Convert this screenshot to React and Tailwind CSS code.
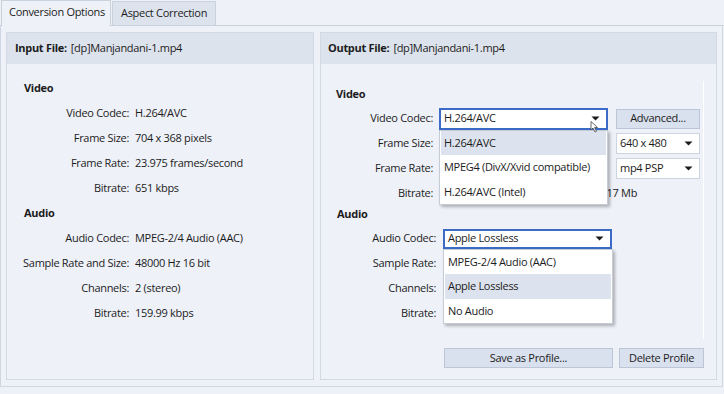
import React from "react";

const Caret = () => (
  <svg width="9" height="5" viewBox="0 0 9 5" className="shrink-0">
    <path d="M0.5 0.5 H8.5 L4.5 4.5 Z" fill="#1b1b1b" />
  </svg>
);

function Combo({ value, focused, className = "" }) {
  return (
    <div
      className={
        "flex items-center justify-between bg-white pl-[3px] pr-[6px] " +
        (focused ? "border-2 border-[#3b6bc6] " : "border border-[#cdd4df] ") +
        className
      }
    >
      <span className="whitespace-nowrap">{value}</span>
      <Caret />
    </div>
  );
}

function Menu({ items, active, className = "" }) {
  return (
    <div
      className={
        "absolute z-10 bg-white border border-[#c6ccd6] shadow-[2px_2px_3px_rgba(0,0,0,0.28)] px-px " +
        className
      }
    >
      {items.map((it, i) => (
        <div
          key={it}
          className={
            "h-[24.5px] flex items-center pl-[3px] whitespace-nowrap " +
            (i === active ? "bg-[#dde3ee]" : "")
          }
        >
          {it}
        </div>
      ))}
    </div>
  );
}

function Button({ children, className = "" }) {
  return (
    <div
      className={
        "flex items-center justify-center whitespace-nowrap bg-[#d9e0ee] border border-[#bcc6d7] " + className
      }
    >
      {children}
    </div>
  );
}

const inputRows = [
  ["Video", null],
  ["Video Codec:", "H.264/AVC"],
  ["Frame Size:", "704 x 368 pixels"],
  ["Frame Rate:", "23.975 frames/second"],
  ["Bitrate:", "651 kbps"],
  ["Audio", null],
  ["Audio Codec:", "MPEG-2/4 Audio (AAC)"],
  ["Sample Rate and Size:", "48000 Hz 16 bit"],
  ["Channels:", "2 (stereo)"],
  ["Bitrate:", "159.99 kbps"],
];

export default function App() {
  return (
    <div
      className="w-[724px] h-[394px] bg-[#eef1f7] text-[#1c1c1c] text-[11px] tracking-[-0.3px] overflow-hidden"
      style={{ fontFamily: '"Segoe UI", "Open Sans", sans-serif' }}
    >
      {/* tabs */}
      <div className="h-[26px] flex items-end border-b border-[#c9d1dd]">
        <div className="ml-[1px] w-[110px] h-[26px] -mb-px bg-[#eef1f8] border-l border-t border-r border-[#c9d1dd] flex items-center whitespace-nowrap pl-[7px] pb-[3px]">
          Conversion Options
        </div>
        <div className="ml-[1px] w-[104px] h-[24px] bg-[#dde3ed] border-l border-t border-r border-[#c9d1dd] flex items-center whitespace-nowrap pl-[8px]">
          Aspect Correction
        </div>
      </div>

      {/* page */}
      <div className="w-[723px] h-[361px] bg-[#eef1f8] border-r border-b border-l border-[#d0d7e2] flex gap-[6px] pl-[5px] pt-[6px]">
        {/* input panel */}
        <div className="w-[308px] h-[348px] border border-[#d3d9e3] bg-[#eef1f8]">
          <div className="h-[31px] bg-[#dde3ec] flex items-center pl-[8px] pb-[1px]">
            <span className="font-bold mr-[4px]">Input File:</span>
            <span>[dp]Manjandani-1.mp4</span>
          </div>
          <div className="pt-[12px]">
            {inputRows.map(([label, value], i) =>
              value === null ? (
                <div key={i} className="h-[25px] flex items-center pl-[17px] font-bold">
                  {label}
                </div>
              ) : (
                <div key={i} className="h-[25px] flex items-center">
                  <span className="w-[122px] text-right whitespace-nowrap">{label}</span>
                  <span className="ml-[6px] whitespace-nowrap">{value}</span>
                </div>
              )
            )}
          </div>
        </div>

        {/* output panel */}
        <div className="w-[397px] h-[348px] border border-[#d3d9e3] bg-[#eef1f8] relative">
          <div className="h-[31px] bg-[#dde3ec] flex items-center pl-[7px] pb-[1px]">
            <span className="font-bold mr-[4px]">Output File:</span>
            <span>[dp]Manjandani-1.mp4</span>
          </div>
          <div className="absolute right-[12px] top-[48px] bottom-[40px] w-px bg-white" />
          <div className="pt-[18px]">
            <div className="h-[24px] flex items-center pl-[15px] font-bold">Video</div>

            <div className="h-[25px] flex items-center">
              <span className="w-[112px] text-right">Video Codec:</span>
              <div className="ml-[6px] relative">
                <Combo value="H.264/AVC" focused className="w-[169px] h-[22px]" />
                <Menu
                  items={["H.264/AVC", "MPEG4 (DivX/Xvid compatible)", "H.264/AVC (Intel)"]}
                  active={0}
                  className="top-[22px] left-0 w-[169px]"
                />
                <svg
                  width="10"
                  height="12"
                  viewBox="0 0 10 12"
                  className="absolute z-20 left-[151px] top-[13px]"
                >
                  <path d="M1 0.5 L1 9 L3 7 L5 11 L6.5 10.3 L4.6 6.5 L7.5 6.5 Z" fill="#fff" stroke="#444" strokeWidth="0.8" />
                </svg>
              </div>
              <Button className="ml-[8px] w-[84px] h-[20px]">Advanced...</Button>
            </div>

            <div className="h-[25px] flex items-center">
              <span className="w-[112px] text-right">Frame Size:</span>
              <div className="ml-[6px] w-[169px]" />
              <Combo value="640 x 480" className="ml-[8px] w-[84px] h-[21px]" />
            </div>

            <div className="h-[25px] flex items-center">
              <span className="w-[112px] text-right">Frame Rate:</span>
              <div className="ml-[6px] w-[169px]" />
              <Combo value="mp4 PSP" className="ml-[8px] w-[84px] h-[21px]" />
            </div>

            <div className="h-[25px] flex items-center">
              <span className="w-[112px] text-right">Bitrate:</span>
              <span className="ml-[165px]">1.17 Mb</span>
            </div>

            <div className="h-[20px] flex items-center pl-[16px] pb-[4px] font-bold">Audio</div>

            <div className="h-[25px] flex items-center">
              <span className="w-[115px] text-right">Audio Codec:</span>
              <div className="ml-[7px] relative">
                <Combo value="Apple Lossless" focused className="w-[169px] h-[20px]" />
                <Menu
                  items={["MPEG-2/4 Audio (AAC)", "Apple Lossless", "No Audio"]}
                  active={1}
                  className="top-[20px] left-0 w-[170px]"
                />
              </div>
            </div>

            <div className="h-[25px] flex items-center">
              <span className="w-[115px] text-right">Sample Rate:</span>
            </div>
            <div className="h-[25px] flex items-center">
              <span className="w-[115px] text-right">Channels:</span>
            </div>
            <div className="h-[25px] flex items-center">
              <span className="w-[115px] text-right">Bitrate:</span>
            </div>

            <div className="mt-[22px] flex justify-end pr-[12px] gap-[6px]">
              <Button className="w-[169px] h-[20px]">Save as Profile...</Button>
              <Button className="w-[85px] h-[20px]">Delete Profile</Button>
            </div>
          </div>
        </div>
      </div>
    </div>
  );
}
